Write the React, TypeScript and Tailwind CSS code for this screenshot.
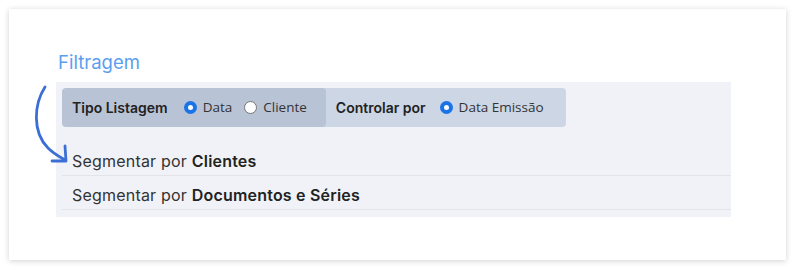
import React, { useState } from "react"

const heading = { fontFamily: "Inter, 'Noto Sans', sans-serif" }
const label = { fontFamily: "'Open Sans', 'Noto Sans', sans-serif" }

const Radio = ({ checked, text, onClick }: { checked: boolean; text: string; onClick: () => void }) => (
  <label className="flex items-center gap-[6px] cursor-pointer whitespace-nowrap" onClick={onClick}>
    <span
      className={
        checked
          ? "w-[13px] h-[13px] shrink-0 rounded-full bg-[#1a73e8] border-[2px] border-[#1a73e8] flex items-center justify-center"
          : "w-[13px] h-[13px] shrink-0 rounded-full bg-white border border-[#767676]"
      }
    >
      {checked && <span className="w-[5px] h-[5px] rounded-full bg-white block" />}
    </span>
    <span className="text-[13.5px] text-[#333]" style={label}>
      {text}
    </span>
  </label>
)

const Arrow = () => (
  <svg className="absolute left-[-26px] top-[2px]" width="40" height="84" viewBox="0 0 40 84" fill="none">
    <path
      d="M15 3 C 4 20, 2 48, 18 64 C 24 70, 30 73, 35 76"
      stroke="#3b6fd6"
      strokeWidth="2.8"
      strokeLinecap="round"
    />
    <path d="M35 62 L 36 77 L 22 77" stroke="#3b6fd6" strokeWidth="2.8" strokeLinecap="round" strokeLinejoin="round" />
  </svg>
)

export default function App() {
  const [tipo, setTipo] = useState<"data" | "cliente">("data")

  return (
    <div className="w-[800px] h-[274px] bg-white pt-[9px] pl-[9px]">
      <div className="w-[777px] h-[251px] bg-white shadow-[0_1px_6px_rgba(0,0,0,0.18)] pt-[42px] pl-[47px]">
        <div className="text-[18.5px] leading-[22px] text-[#5b9ef0] pl-[2px]" style={heading}>
          Filtragem
        </div>
        <div className="relative mt-[9px] w-[675px] h-[135px] bg-[#f0f2f7] pt-[6px] pl-[6px]">
          <Arrow />
          <div className="flex w-[504px] h-[39px] rounded-[4px] bg-[#ccd6e4] overflow-hidden whitespace-nowrap">
            <div className="flex items-center gap-[16px] pl-[10px] pr-[19px] bg-[#b8c4d6] rounded-[4px]">
              <span className="text-[14px] font-semibold text-[#222]" style={heading}>
                Tipo Listagem
              </span>
              <div className="flex items-center gap-[12px]">
                <Radio checked={tipo === "data"} text="Data" onClick={() => setTipo("data")} />
                <Radio checked={tipo === "cliente"} text="Cliente" onClick={() => setTipo("cliente")} />
              </div>
            </div>
            <div className="flex items-center gap-[14px] pl-[10px]">
              <span className="text-[14px] font-semibold text-[#222]" style={heading}>
                Controlar por
              </span>
              <Radio checked text="Data Emissão" onClick={() => {}} />
            </div>
          </div>
          <div
            className="h-[49px] pt-[24px] leading-[20px] pl-[10px] border-b border-[#e3e4e8] text-[16px] tracking-[0.2px] text-[#333]"
            style={heading}
          >
            Segmentar por <span className="font-semibold text-[#222]">Clientes</span>
          </div>
          <div
            className="h-[34px] pt-[9px] leading-[20px] pl-[10px] border-b border-[#e3e4e8] text-[16px] tracking-[0.2px] text-[#333]"
            style={heading}
          >
            Segmentar por <span className="font-semibold text-[#222]">Documentos e Séries</span>
          </div>
        </div>
      </div>
    </div>
  )
}
